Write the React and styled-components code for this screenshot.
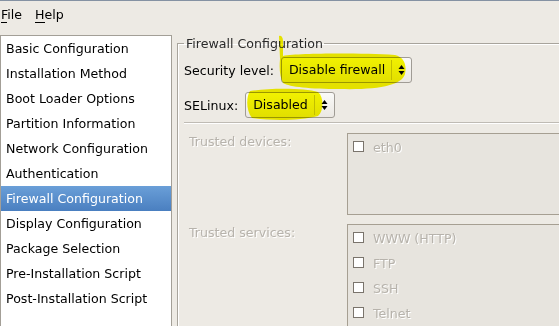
import React from "react";
import styled, { createGlobalStyle } from "styled-components";

const GlobalStyle = createGlobalStyle`
    html, body {
        margin: 0;
        padding: 0;
        background: #edeae4;
        overflow: hidden;
    }
    body {
        font-family: "DejaVu Sans", "Liberation Sans", sans-serif;
        font-size: 12.6px;
        color: #000;
    }
`

const Window = styled.div`
    position: relative;
    width: 559px;
    height: 326px;
    border-top: 1px solid #8592a3;
    box-sizing: border-box;
    overflow: hidden;
`

const MenuBar = styled.div`
    display: flex;
    height: 34px;
    align-items: flex-start;
    padding-top: 6px;
    box-sizing: border-box;
`

const MenuItem = styled.span`
    padding: 0 10px 0 1px;
    margin-right: 2px;
    u {
        text-decoration: none;
        border-bottom: 1px solid #000;
    }
`

const Body = styled.div`
    display: flex;
    gap: 5px;
`

const Sidebar = styled.ul`
    list-style: none;
    margin: 0;
    padding: 0;
    width: 170px;
    flex-shrink: 0;
    height: 300px;
    background: #fff;
    border: 1px solid #a39f97;
    border-bottom: none;
    box-sizing: content-box;
`

const SideItem = styled.li`
    height: 25px;
    line-height: 25px;
    padding-left: 5px;
    white-space: nowrap;
    color: ${p => (p.$active ? "#fff" : "#000")};
    background: ${p => (p.$active ? "linear-gradient(#6a9fd8, #4a7fc0)" : "transparent")};
`

const Frame = styled.fieldset`
    margin: 1px 0 0 0;
    padding: 6px 0 0 6px;
    width: 420px;
    flex-shrink: 0;
    height: 300px;
    border: 1px solid #a8a49c;
    box-shadow: inset 1px 1px 0 #fff;
    border-right: none;
    border-bottom: none;
    min-width: 0;
`

const Legend = styled.legend`
    padding: 0 1px 0 2px;
    margin-left: 0;
    color: #2a2a2a;
`

const FieldRow = styled.div`
    display: flex;
    align-items: center;
    height: 26px;
    margin-bottom: ${p => p.$gap || 0}px;
`

const Label = styled.span`
    margin-right: 7px;
    white-space: nowrap;
`

const Combo = styled.div`
    display: flex;
    align-items: center;
    height: 26px;
    box-sizing: border-box;
    padding: 0 6px 0 7px;
    border: 1px solid #a09c95;
    border-radius: 3px;
    background: linear-gradient(#fafaf8, #ebe8e3);
`

const ComboText = styled.span`
    padding-right: 6px;
    margin-right: 6px;
    border-right: 1px solid #c9c5be;
    line-height: 20px;
`

const Separator = styled.div`
    height: 1px;
    background: #bfbbb4;
    border-bottom: 1px solid #fff;
    margin: 4px 0 9px 0;
`

const Section = styled.div`
    display: grid;
    grid-template-columns: 158px 1fr;
    padding-left: 5px;
    margin-bottom: ${p => p.$gap || 0}px;
`

const DimLabel = styled.span`
    color: #b7b3ac;
    text-shadow: 1px 1px 0 #fff;
    padding-top: 1px;
`

const CheckBox = styled.div`
    height: ${p => p.$height}px;
    border: 1px solid #a69f92;
    background: #e7e4de;
    padding: 0 0 0 5px;
    box-sizing: border-box;
`

const CheckRow = styled.div`
    display: flex;
    align-items: center;
    height: 25px;
    gap: 9px;
`

const Tick = styled.span`
    width: 9px;
    height: 9px;
    background: #fff;
    border: 1px solid #7a746c;
`

const Highlight = styled.svg`
    position: absolute;
    left: 0;
    top: 0;
    mix-blend-mode: multiply;
    pointer-events: none;
`

function Arrows() {
    return (
        <svg width="7" height="12" viewBox="0 0 7 12">
            <path d="M0.5 5 L3.5 1 L6.5 5 Z" fill="#000" />
            <path d="M0.5 7 L3.5 11 L6.5 7 Z" fill="#000" />
        </svg>
    )
}

const sections = [
    "Basic Configuration",
    "Installation Method",
    "Boot Loader Options",
    "Partition Information",
    "Network Configuration",
    "Authentication",
    "Firewall Configuration",
    "Display Configuration",
    "Package Selection",
    "Pre-Installation Script",
    "Post-Installation Script",
]

const services = ["WWW (HTTP)", "FTP", "SSH", "Telnet"]

export default function App() {
    return (
        <Window>
            <GlobalStyle />
            <MenuBar>
                <MenuItem><u>F</u>ile</MenuItem>
                <MenuItem><u>H</u>elp</MenuItem>
            </MenuBar>
            <Body>
                <Sidebar>
                    {sections.map(s => (
                        <SideItem key={s} $active={s === "Firewall Configuration"}>{s}</SideItem>
                    ))}
                </Sidebar>
                <Frame>
                    <Legend>Firewall Configuration</Legend>
                    <FieldRow $gap={9}>
                        <Label>Security level:</Label>
                        <Combo>
                            <ComboText>Disable firewall</ComboText>
                            <Arrows />
                        </Combo>
                    </FieldRow>
                    <FieldRow>
                        <Label>SELinux:</Label>
                        <Combo>
                            <ComboText>Disabled</ComboText>
                            <Arrows />
                        </Combo>
                    </FieldRow>
                    <Separator />
                    <Section $gap={9}>
                        <DimLabel>Trusted devices:</DimLabel>
                        <CheckBox $height={82}>
                            <CheckRow>
                                <Tick />
                                <DimLabel>eth0</DimLabel>
                            </CheckRow>
                        </CheckBox>
                    </Section>
                    <Section>
                        <DimLabel>Trusted services:</DimLabel>
                        <CheckBox $height={120}>
                            {services.map(s => (
                                <CheckRow key={s}>
                                    <Tick />
                                    <DimLabel>{s}</DimLabel>
                                </CheckRow>
                            ))}
                        </CheckBox>
                    </Section>
                </Frame>
            </Body>
            <Highlight width="559" height="326" viewBox="0 0 559 326">
                <path
                    d="M279 35 C281 34 283 36 283 40 L283 55 C300 52 360 52 395 54 C404 56 407 64 405 73 C402 84 380 89 340 88 C310 88 290 86 283 82 C280 76 279 68 280 58 Z"
                    fill="#f6f600"
                />
                <path
                    d="M250 90 C270 87 305 87 318 91 C324 96 324 110 318 115 C300 120 270 120 252 117 C246 110 246 96 250 90 Z"
                    fill="#f6f600"
                />
            </Highlight>
        </Window>
    )
}
